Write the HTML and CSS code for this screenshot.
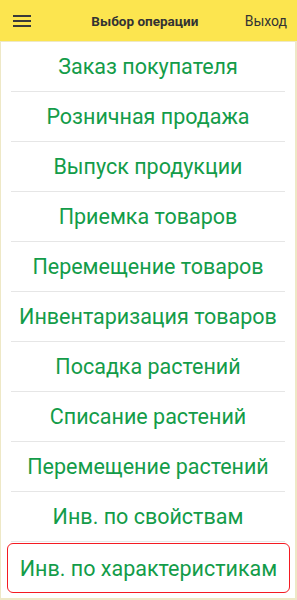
FILE: index.html
```html
<!DOCTYPE html>
<html>

<head>
    <meta charset="utf-8">
    <link rel="stylesheet" href="styles.css">
</head>

<body>
    <div class="page">
        <div class="header">
            <div class="menu-btn">
                <span></span>
                <span></span>
                <span></span>
            </div>
            <div class="title">Выбор операции</div>
            <div class="exit">Выход</div>
        </div>
        <div class="list">
            <div class="item">Заказ покупателя</div>
            <div class="item">Розничная продажа</div>
            <div class="item">Выпуск продукции</div>
            <div class="item">Приемка товаров</div>
            <div class="item">Перемещение товаров</div>
            <div class="item">Инвентаризация товаров</div>
            <div class="item">Посадка растений</div>
            <div class="item">Списание растений</div>
            <div class="item">Перемещение растений</div>
            <div class="item">Инв. по свойствам</div>
            <div class="item selected">Инв. по характеристикам</div>
        </div>
    </div>
</body>

</html>
```

FILE: styles.css
```css
html,
body {
    margin: 0;
    padding: 0;
}

body {
    font-family: Roboto, "Noto Sans", sans-serif;
    background-color: #fff;
}

.page {
    width: 297px;
    height: 600px;
    box-sizing: border-box;
    border-left: 1px solid #eee8c6;
    border-right: 2px solid #eee8c6;
    border-bottom: 2px solid #eee8c6;
    display: flex;
    flex-direction: column;
}

.header {
    height: 41px;
    flex-shrink: 0;
    background-color: #fce54f;
    border-bottom: 1px solid #eee8c6;
    margin: 0 -2px 0 -1px;
    display: flex;
    align-items: center;
    padding: 0 10px 0 13px;
}

.menu-btn {
    width: 18px;
    display: flex;
    flex-direction: column;
    gap: 3px;
}

.menu-btn span {
    display: block;
    height: 2px;
    background-color: #3a3a3a;
}

.title {
    flex: 1;
    text-align: center;
    font-size: 13.5px;
    font-weight: bold;
    color: #333;
    padding-left: 14px;
}

.exit {
    font-size: 14px;
    color: #333;
}

.list {
    display: flex;
    flex-direction: column;
}

.item {
    height: 49px;
    margin: 0 10px;
    border-bottom: 1px solid #e6e6e6;
    display: flex;
    align-items: center;
    justify-content: center;
    font-size: 21.5px;
    color: #139c49;
    white-space: nowrap;
}

.item.selected {
    margin: 1px 5px 0 6px;
    height: 48px;
    border: 1.5px solid #f41a22;
    border-radius: 6px;
}
```
